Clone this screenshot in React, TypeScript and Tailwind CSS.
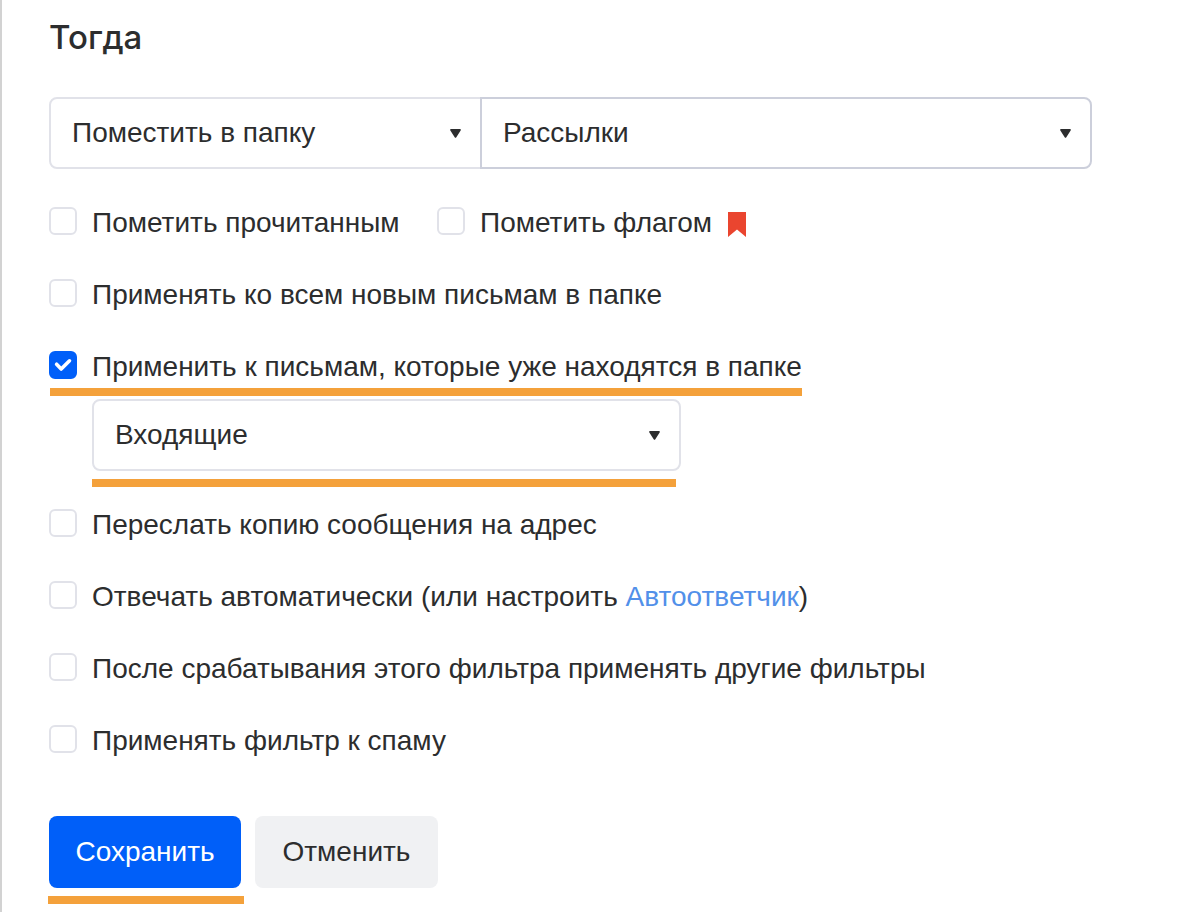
import { useState } from 'react';
import type { ReactNode } from 'react';

function Select({ label, options, className, border }: { label: string; options: string[]; className: string; border: string }) {
  return (
    <div className={`relative ${className}`}>
      <select
        aria-label={label}
        className={`h-[72px] w-full appearance-none rounded-[inherit] border-2 bg-white pr-14 pl-[21px] outline-none ${border}`}
      >
        {options.map((o) => (
          <option key={o}>{o}</option>
        ))}
      </select>
      <svg viewBox="0 0 12 9" className="pointer-events-none absolute top-8 right-[21px] h-[9px] w-[11px]" preserveAspectRatio="none" fill="#2c2d2e">
        <path d="M1.2 0h9.6c.9 0 1.3.9.8 1.6L6.9 8.2c-.5.7-1.3.7-1.8 0L.4 1.6C-.1.9.3 0 1.2 0z" />
      </svg>
    </div>
  );
}

function Check({ children, initial = false }: { children: ReactNode; initial?: boolean }) {
  const [checked, setChecked] = useState(initial);

  return (
    <label className="flex items-start gap-[15px] leading-10">
      <span className="relative mt-1 flex size-7 shrink-0">
        <input
          type="checkbox"
          checked={checked}
          onChange={(e) => setChecked(e.target.checked)}
          className="size-7 appearance-none rounded-md border-2 border-[#e1e2e9] bg-white checked:border-[#005ff9] checked:bg-[#005ff9]"
        />
        {checked && (
          <svg viewBox="0 0 28 28" className="pointer-events-none absolute inset-0" fill="none" stroke="#fff" strokeWidth="3.6" strokeLinecap="round" strokeLinejoin="round">
            <path d="M7.6 13.2l4.6 4.8 8.3-8.2" />
          </svg>
        )}
      </span>
      <span>{children}</span>
    </label>
  );
}

export default function App() {
  return (
    <main className="min-h-screen border-l-2 border-[#d2d2d2] bg-white pt-[17px] pr-[98px] pb-2 pl-[47px] font-['Liberation_Sans',Arial,sans-serif] text-[28px] text-[#2c2d2e]">
      <h1 className="font-[Inter,sans-serif] text-[33px] leading-10 font-medium">Тогда</h1>

      <form onSubmit={(e) => e.preventDefault()}>
        <div className="mt-10 flex max-w-[1043px]">
          <Select
            label="Действие"
            options={['Поместить в папку', 'Удалить навсегда']}
            className="w-[433px] shrink rounded-l-lg"
            border="border-[#e1e2e9]"
          />
          <Select
            label="Папка"
            options={['Рассылки', 'Входящие']}
            className="-ml-0.5 flex-1 rounded-r-lg"
            border="border-[#cccfdb]"
          />
        </div>

        <div className="mt-[34px] flex flex-col gap-8">
          <div className="flex flex-wrap items-start">
            <div className="min-w-[388px]">
              <Check>Пометить прочитанным</Check>
            </div>
            <div className="flex gap-4">
              <Check>Пометить флагом</Check>
              <svg viewBox="0 0 18 25" className="mt-[9px] h-[25px] w-[18px]" fill="#ea452f">
                <path d="M0 0h18v25l-9-7.5L0 25z" />
              </svg>
            </div>
          </div>
          <Check>Применять ко всем новым письмам в папке</Check>
          <Check initial>Применить к письмам, которые уже находятся в папке</Check>
        </div>

        <div className="mt-px ml-px h-2 max-w-[752px] bg-[#f4a13b]" />
        <div className="mt-[3px] ml-[43px]">
          <Select
            label="Папка с письмами"
            options={['Входящие', 'Рассылки']}
            className="max-w-[589px] rounded-lg"
            border="border-[#e1e2e9]"
          />
          <div className="mt-2 h-2 max-w-[584px] bg-[#f4a13b]" />
        </div>

        <div className="mt-[18px] flex flex-col gap-8">
          <Check>Переслать копию сообщения на адрес</Check>
          <Check>
            Отвечать автоматически (или настроить <a href="#" className="text-[#5290e9]">Автоответчик</a>)
          </Check>
          <Check>После срабатывания этого фильтра применять другие фильтры</Check>
          <Check>Применять фильтр к спаму</Check>
        </div>

        <div className="mt-[55px] flex gap-3.5">
          <button type="submit" className="h-[72px] w-48 rounded-lg bg-[#005ff9] text-white">Сохранить</button>
          <button type="button" className="h-[72px] w-[183px] rounded-lg bg-[#f0f1f3]">Отменить</button>
        </div>
        <div className="mt-2 -ml-px h-2 w-[196px] bg-[#f4a13b]" />
      </form>
    </main>
  );
}
